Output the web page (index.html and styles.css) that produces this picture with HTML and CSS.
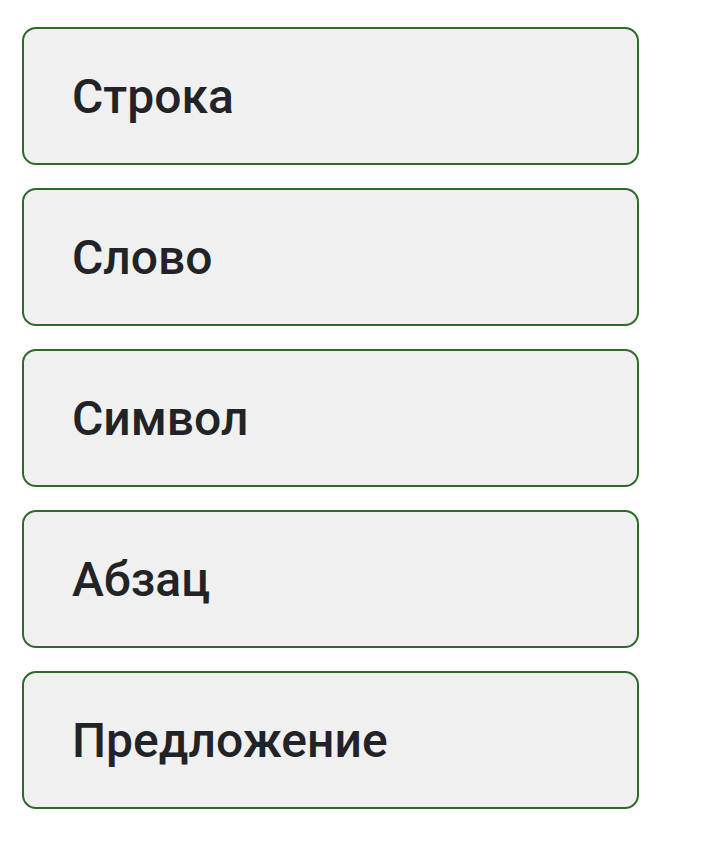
FILE: index.html
```html
<!DOCTYPE html>
<html lang="ru">
<head>
<meta charset="utf-8">
<link rel="stylesheet" href="styles.css">
</head>
<body>
<div class="list">
  <div class="card">Строка</div>
  <div class="card">Слово</div>
  <div class="card">Символ</div>
  <div class="card">Абзац</div>
  <div class="card">Предложение</div>
</div>
</body>
</html>
```
FILE: styles.css
```css
html, body {
  margin: 0;
  padding: 0;
  background: #ffffff;
}
.list {
  display: flex;
  flex-direction: column;
  gap: 23px;
  padding: 27px 0 0 22px;
  width: 617px;
}
.card {
  box-sizing: border-box;
  height: 138px;
  border: 2px solid #2f6a2c;
  border-radius: 14px;
  background: #f0f0f0;
  display: flex;
  align-items: center;
  padding-left: 48px;
  font-family: Roboto, "Noto Sans", sans-serif;
  font-weight: 500;
  font-size: 48px;
  color: #212327;
}
```
